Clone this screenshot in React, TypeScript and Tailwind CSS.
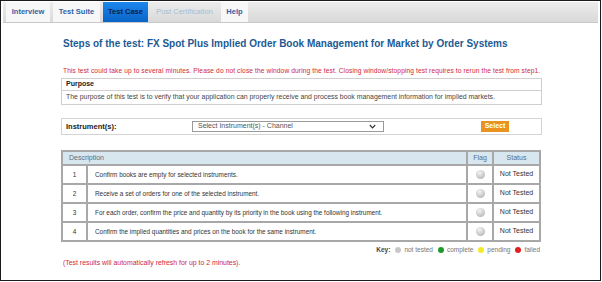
import React from 'react';

const TABS = [
  { label: 'Interview', w: 'w-[44px]', state: 'normal' },
  { label: 'Test Suite', w: 'w-[47px]', state: 'normal' },
  { label: 'Test Case', w: 'w-[45px]', state: 'active' },
  { label: 'Post Certification', w: 'w-[67px]', state: 'disabled' },
  { label: 'Help', w: 'w-[27px]', state: 'normal' },
];

const STEPS = [
  'Confirm books are empty for selected instruments.',
  'Receive a set of orders for one of the selected instrument.',
  'For each order, confirm the price and quantity by its priority in the book using the following instrument.',
  'Confirm the implied quantities and prices on the book for the same instrument.',
];

const Dot: React.FC<{ color: string }> = ({ color }) => (
  <span className={`inline-block w-[6px] h-[6px] rounded-full mr-[3px] ${color}`} />
);

const App: React.FC = () => {
  return (
    <div className="w-[602px] h-[282px] bg-white" style={{ fontFamily: '"Liberation Sans", Arial, sans-serif' }}>
      <div className="w-[601px] h-[281px] border-[1.5px] border-[#1a1a1a] flex flex-col">
        {/* Tabs */}
        <div className="mx-[2px] mt-[1px] h-[21px] bg-gradient-to-b from-[#ececec] to-[#d9d9d9] border-b border-[#c8c8c8] flex items-end gap-[3px] pl-[3px]">
          {TABS.map(t => (
            <div
              key={t.label}
              className={`${t.w} h-[20px] flex items-center justify-center text-[7.5px] font-bold ${
                t.state === 'active'
                  ? 'bg-gradient-to-b from-[#1b86ec] to-[#0a64c8] text-[#0b1f4a]'
                  : t.state === 'disabled'
                  ? 'text-[#a9bcd3] font-normal'
                  : 'bg-[#f7f7f7] text-[#2f62a8]'
              }`}
            >
              {t.label}
            </div>
          ))}
        </div>

        <div className="pl-[60px] w-[541px]">
          {/* Title */}
          <div className="mt-[14px] pl-[2px] text-[10px] font-bold text-[#1d5a93] leading-[14px] whitespace-nowrap">
            Steps of the test: FX Spot Plus Implied Order Book Management for Market by Order Systems
          </div>

          <div className="mt-[15px] pl-[2px] text-[6.65px] tracking-[0.1px] text-[#d0283a] leading-[9px] whitespace-nowrap">
            This test could take up to several minutes. Please do not close the window during the test. Closing window/stopping test requires to rerun the test from step1.
          </div>

          {/* Purpose */}
          <div className="mt-[3px] border border-[#cfcfcf]">
            <div className="h-[12px] flex items-center pl-[4px] text-[7px] font-bold text-[#222] border-b border-[#cfcfcf]">
              Purpose
            </div>
            <div className="h-[13px] flex items-center pl-[4px] text-[6.9px] text-[#444]">
              The purpose of this test is to verify that your application can properly receive and process book management information for implied markets.
            </div>
          </div>

          {/* Instrument */}
          <div className="mt-[13px] h-[17px] border border-[#d4d4d4] flex items-center pl-[4px]">
            <span className="w-[126px] text-[7.5px] font-bold text-[#222]">Instrument(s):</span>
            <div className="w-[192px] h-[11px] border border-[#9a9a9a] flex items-center justify-between pl-[5px] pr-[7px] text-[7px] text-[#555]">
              <span>Select Instrument(s) - Channel</span>
              <svg width="7" height="5" viewBox="0 0 7 5">
                <path d="M0.8 1 L3.5 3.8 L6.2 1" fill="none" stroke="#333" strokeWidth="1.2" />
              </svg>
            </div>
            <div className="ml-[97px] w-[28px] h-[11px] bg-[#e8921f] text-white text-[7px] font-bold flex items-center justify-center">
              Select
            </div>
          </div>

          {/* Steps table */}
          <table className="mt-[15px] w-[480px] border-collapse border-2 border-[#a8a8a8] text-[6.4px] text-[#333]">
            <thead>
              <tr className="bg-[#d7e6ef] h-[14px]">
                <th colSpan={2} className="text-left pl-[6px] font-normal text-[#5b6f80] text-[7px] border-r-2 border-[#a8a8a8]">Description</th>
                <th className="w-[26px] font-normal text-[#5b6f80] text-[7px] border-r-2 border-[#a8a8a8]">Flag</th>
                <th className="w-[47px] font-normal text-[#5b6f80] text-[7px]">Status</th>
              </tr>
            </thead>
            <tbody>
              {STEPS.map((s, i) => (
                <tr key={i} className="h-[19px] border-t-2 border-[#a8a8a8]">
                  <td className="w-[25px] text-center border-r-2 border-[#a8a8a8]">{i + 1}</td>
                  <td className="pl-[7px] border-r-2 border-[#a8a8a8]">{s}</td>
                  <td className="border-r-2 border-[#a8a8a8]">
                    <div className="mx-auto w-[9px] h-[9px] rounded-full bg-[radial-gradient(circle_at_40%_30%,#f4f4f4,#a9a9a9)]" />
                  </td>
                  <td className="text-center text-[7px]">Not Tested</td>
                </tr>
              ))}
            </tbody>
          </table>

          {/* Key */}
          <div className="mt-[3px] flex justify-end items-center gap-[5px] text-[6.5px] text-[#777] pr-[2px]">
            <span className="font-bold text-[#444]">Key:</span>
            <span className="flex items-center"><Dot color="bg-[#c8c8c8]" />not tested</span>
            <span className="flex items-center"><Dot color="bg-[#1e9a2a]" />complete</span>
            <span className="flex items-center"><Dot color="bg-[#f2ea2a]" />pending</span>
            <span className="flex items-center"><Dot color="bg-[#e02020]" />failed</span>
          </div>

          <div className="mt-[3px] pl-[2px] text-[6.9px] text-[#d0283a]">
            (Test results will automatically refresh for up to 2 minutes).
          </div>
        </div>
      </div>
    </div>
  );
};

export default App;
